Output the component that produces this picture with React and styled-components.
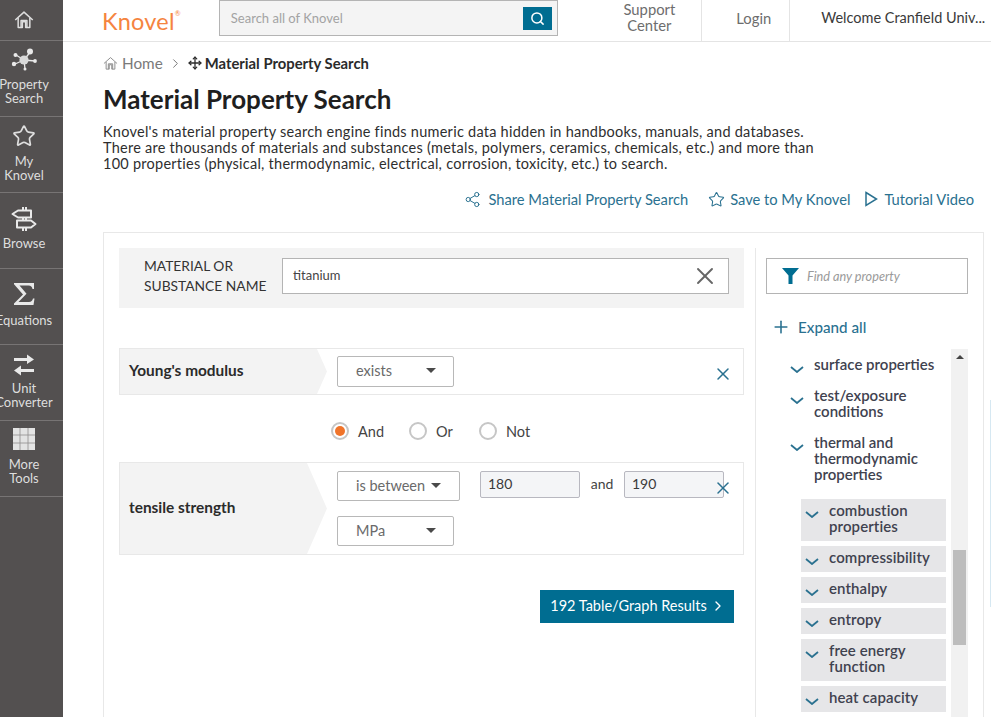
import React from 'react';
import styled, { createGlobalStyle } from 'styled-components';
import { Search, X, Plus, ChevronRight, Star, Move, Share2 } from 'lucide-react';

const GlobalStyle = createGlobalStyle`
  html, body {
    margin: 0;
    height: 717px;
    overflow: hidden;
    background: #fff;
  }
  body {
    font-family: Lato, "Open Sans", sans-serif;
    color: #2e2e2e;
  }
  * {
    box-sizing: border-box;
  }
`;

const Page = styled.div`
  display: flex;
  width: 991px;
  height: 717px;
  overflow: hidden;
  position: relative;
`;

const Sidebar = styled.nav`
  width: 63px;
  flex: none;
  background: #535050;
  color: #dedede;
  overflow: hidden;
`;

const NavItem = styled.div`
  height: ${(p) => (p.$home ? '41px' : '76px')};
  padding: ${(p) => p.$pt}px 15px 0 0;
  border-bottom: 1px solid #777474;
  display: flex;
  flex-direction: column;
  align-items: center;
  white-space: nowrap;
  font-size: 13px;
  line-height: 14px;
  text-align: center;

  svg {
    flex: none;
    margin-bottom: ${(p) => p.$gap || 0}px;
  }
`;

const Main = styled.div`
  flex: 1;
  min-width: 0;
`;

const Header = styled.header`
  height: 42px;
  border-bottom: 1px solid #e4e4e4;
  display: flex;
  align-items: center;
  padding-left: 39px;
`;

const Logo = styled.div`
  width: 117px;
  color: #f5843f;
  font-size: 23.5px;
  letter-spacing: 0.2px;

  sup {
    font-size: 7px;
    vertical-align: 14px;
    line-height: 0;
  }
`;

const SearchBox = styled.div`
  width: 340px;
  height: 36px;
  margin-top: -5px;
  background: #f4f4f4;
  border: 1px solid #b4b4b4;
  display: flex;
  align-items: center;
  justify-content: space-between;
  padding: 0 5px 0 11px;
  font-size: 13px;
  color: #a3a3a3;
`;

const SearchButton = styled.div`
  width: 29px;
  height: 23px;
  background: #006d91;
  color: #fff;
  display: flex;
  align-items: center;
  justify-content: center;
`;

const HeaderLink = styled.div`
  width: ${(p) => p.$w}px;
  margin-left: ${(p) => p.$ml || 0}px;
  height: 41px;
  padding: 0 0 ${(p) => p.$pb || 6}px ${(p) => p.$pl || 0}px;
  display: flex;
  align-items: center;
  justify-content: center;
  text-align: center;
  font-size: 14.8px;
  line-height: 16px;
  color: #6d6d6d;
  border-left: ${(p) => (p.$divider ? '1px solid #e4e4e4' : 'none')};
  white-space: nowrap;
`;

const Welcome = styled(HeaderLink)`
  justify-content: flex-start;
  color: #3a3a3a;
  font-size: 14.5px;
`;

const Content = styled.div`
  padding: 11px 7px 0 40px;
`;

const Breadcrumb = styled.div`
  height: 20px;
  display: flex;
  align-items: center;
  font-size: 15.3px;
  color: #7a7a7a;

  svg {
    flex: none;
  }
`;

const CrumbHome = styled.span`
  margin-left: 4px;
`;

const CrumbSep = styled.span`
  display: flex;
  margin: 0 5px;
`;

const CrumbCurrent = styled.span`
  color: #2b2b2b;
  font-weight: 700;
  font-size: 14.8px;
  margin-left: 3px;
`;

const Title = styled.h1`
  margin: 11px 0 0;
  font-size: 26px;
  line-height: 30px;
  font-weight: 700;
  color: #1f1f1f;
`;

const Intro = styled.p`
  margin: 10px 0 0;
  font-size: 14.5px;
  letter-spacing: 0.25px;
  line-height: 16px;
  color: #2e2e2e;
  white-space: nowrap;
`;

const Actions = styled.div`
  height: 24px;
  margin-top: 15px;
  padding-right: 10px;
  display: flex;
  justify-content: flex-end;
`;

const ActionLink = styled.div`
  display: flex;
  align-items: center;
  gap: ${(p) => p.$gap || 6}px;
  margin-left: ${(p) => p.$ml || 0}px;
  font-size: 14.7px;
  color: #2a7190;
  white-space: nowrap;
`;

const Panel = styled.section`
  margin-top: 21px;
  height: 520px;
  border: 1px solid #e8e8e8;
  display: flex;
`;

const Form = styled.div`
  width: 651px;
  flex: none;
  padding: 15px 11px 0 15px;
`;

const SubstanceRow = styled.div`
  height: 60px;
  background: #f3f3f3;
  display: flex;
  align-items: center;
  padding: 0 15px 0 25px;
`;

const SubstanceLabel = styled.div`
  width: 138px;
  flex: none;
  padding-bottom: 4px;
  font-size: 13.8px;
  line-height: 20px;
  color: #333;
`;

const SubstanceInput = styled.div`
  flex: 1;
  height: 36px;
  margin-top: -4px;
  background: #fff;
  border: 1px solid #b4b4b4;
  display: flex;
  align-items: center;
  justify-content: space-between;
  padding: 0 9px 0 10px;
  font-size: 13px;
  color: #444;

  span {
    padding-bottom: 3px;
  }
`;

const CriteriaRow = styled.div`
  height: ${(p) => p.$h}px;
  margin-top: ${(p) => p.$mt || 0}px;
  border: 1px solid #e8e8e8;
  display: flex;
  position: relative;
`;

const CriteriaLabel = styled.div`
  width: 207px;
  flex: none;
  background: #f3f3f3;
  display: flex;
  align-items: center;
  padding: 0 0 3px 9px;
  font-size: 15.4px;
  font-weight: 700;
  color: #2b2b2b;
  clip-path: polygon(0 0, ${(p) => p.$cut}px 0, 100% 50%, ${(p) => p.$cut}px 100%, 0 100%);
`;

const CriteriaFields = styled.div`
  flex: 1;
  padding: ${(p) => p.$pt}px 0 0 10px;
  display: flex;
  flex-wrap: wrap;
  align-content: flex-start;
  align-items: flex-start;
`;

const Select = styled.div`
  width: ${(p) => p.$w}px;
  height: ${(p) => p.$h || 30}px;
  flex: none;
  border: 1px solid #b8b8b8;
  border-radius: 2px;
  background: #fff;
  display: flex;
  align-items: center;
  justify-content: space-between;
  padding: 0 ${(p) => p.$pr || 17}px 2px 18px;
  font-size: 14.5px;
  color: #6a6a6a;
`;

const Caret = styled.span`
  width: 0;
  height: 0;
  border-left: 5.5px solid transparent;
  border-right: 5.5px solid transparent;
  border-top: 5.5px solid #4a4a4a;
`;

const NumberInput = styled.div`
  width: 100px;
  height: 27px;
  flex: none;
  margin-left: ${(p) => p.$ml || 0}px;
  border: 1px solid #b8b8c0;
  border-radius: 2px;
  background: #f4f5f7;
  display: flex;
  align-items: center;
  padding: 0 0 2px 7px;
  font-size: 14px;
  color: #3a3a3a;
`;

const AndText = styled.span`
  width: 44px;
  height: 26px;
  flex: none;
  text-align: center;
  font-size: 14px;
  line-height: 26px;
  color: #444;
`;

const FieldBreak = styled.div`
  flex-basis: 100%;
  height: 15px;
`;

const RemoveButton = styled.div`
  position: absolute;
  right: 10px;
  top: 15px;
  color: #2a7190;
  display: flex;
`;

const Operators = styled.div`
  height: 67px;
  padding: 5px 0 0 212px;
  display: flex;
  align-items: center;
`;

const Operator = styled.label`
  display: flex;
  align-items: center;
  gap: 9px;
  width: ${(p) => p.$w}px;
  font-size: 14.5px;
  color: #444;
`;

const Radio = styled.span`
  width: 18px;
  height: 18px;
  flex: none;
  border-radius: 50%;
  border: 2px solid #c6c6c6;
  background: #fff;
  display: flex;
  align-items: center;
  justify-content: center;

  &::after {
    content: '';
    width: 10px;
    height: 10px;
    border-radius: 50%;
    background: ${(p) => (p.$on ? '#f0742a' : 'transparent')};
  }
`;

const ResultRow = styled.div`
  display: flex;
  justify-content: flex-end;
  margin-top: 35px;
  padding-right: 10px;
`;

const ResultButton = styled.div`
  width: 194px;
  height: 33px;
  background: #006d91;
  color: #fff;
  display: flex;
  align-items: center;
  justify-content: center;
  gap: 3px;
  padding: 0 0 2px 2px;
  font-size: 14.5px;
`;

const Facets = styled.aside`
  flex: 1;
  min-width: 0;
  margin-top: 15px;
  border-left: 1px solid #e8e8e8;
  padding: 10px 15px 0 10px;
  display: flex;
  flex-direction: column;
`;

const FilterBox = styled.div`
  height: 36px;
  flex: none;
  border: 1px solid #b4b4b4;
  display: flex;
  align-items: center;
  gap: 8px;
  padding: 0 0 1px 15px;
  font-size: 12.7px;
  font-style: italic;
  color: #9a9a9a;
`;

const ExpandAll = styled.div`
  margin: 22px 0 0 5px;
  height: 22px;
  flex: none;
  display: flex;
  align-items: center;
  gap: 7px;
  font-size: 15.2px;
  font-weight: 500;
  color: #2a7190;
`;

const TreeArea = styled.div`
  margin-top: 11px;
  flex: 1;
  min-height: 0;
  display: flex;
  overflow: hidden;
`;

const Tree = styled.div`
  flex: 1;
  min-width: 0;
  padding: 7px 5px 0 24px;
`;

const Track = styled.div`
  width: 17px;
  flex: none;
  background: #f1f1f1;
  position: relative;
`;

const TrackArrow = styled.span`
  position: absolute;
  left: 5px;
  top: 6px;
  width: 0;
  height: 0;
  border-left: 4px solid transparent;
  border-right: 4px solid transparent;
  border-bottom: 4px solid #444;
`;

const Thumb = styled.span`
  position: absolute;
  left: 2px;
  top: 201px;
  width: 13px;
  height: 95px;
  background: #bdbdbd;
`;

const TopItem = styled.div`
  display: flex;
  align-items: flex-start;
  gap: 10px;
  margin-bottom: ${(p) => p.$mb || 15}px;
  font-size: 15px;
  line-height: 16px;
  font-weight: 600;
  color: #40424f;

  svg {
    flex: none;
    margin-top: 10px;
  }
`;

const SubItem = styled(TopItem)`
  margin: 0 0 5.5px 11px;
  padding: 3px 0 6.5px 4px;
  background: #e6e6e8;
  letter-spacing: 0.1px;

  svg {
    margin-top: 9px;
  }
`;

const EdgeLine = styled.div`
  position: absolute;
  right: 0;
  top: 400px;
  width: 1px;
  height: 207px;
  background: #d6e8f2;
`;

const HomeIcon = ({ size = 20, color = 'currentColor', sw = 1.8 }) => (
  <svg width={size} height={size} viewBox="0 0 24 24" fill="none" stroke={color} strokeWidth={sw} strokeLinejoin="round">
    <path d="M1.500 12 12 2.500 22.500 12" />
    <path d="M5 9.500V21h5v-7h4v7h5V9.500" />
    <path d="M8.500 21v-8.500h7V21" />
  </svg>
);

const NetworkIcon = () => (
  <svg width="28" height="24" viewBox="0 0 28 24" fill="#e9e9e9" stroke="#e9e9e9">
    <path d="M14 12 6 7M14 12l7-9M14 12 5 16M14 12l1 9M14 12l11 1" strokeWidth="1.3" />
    <circle cx="14" cy="12" r="4.600" fill="#d9d9d9" stroke="none" />
    <circle cx="20" cy="3.500" r="3" stroke="none" />
    <circle cx="5.500" cy="7" r="2" stroke="none" />
    <circle cx="4" cy="16" r="2.200" stroke="none" />
    <circle cx="25" cy="13" r="1.900" stroke="none" />
    <circle cx="15" cy="21" r="1.500" stroke="none" />
  </svg>
);

const SignIcon = () => (
  <svg width="26" height="24" viewBox="0 0 26 24" fill="none" stroke="#e9e9e9" strokeWidth="2" strokeLinejoin="round">
    <path d="M7 10.500 1.500 7 7 3.500h13v7H7z" />
    <path d="M6 13.500h14l4.500 3.500-4.500 3.500H6z" />
    <path d="M12 3.500V0M15 3.500V0M12 24v-3.500M15 24v-3.500M12 10.500v3M15 10.500v3" />
  </svg>
);

const SigmaIcon = () => (
  <svg width="24" height="26" viewBox="0 0 24 26" fill="#e9e9e9">
    <path d="M2 2h20v6h-1.500c-.4-2-1.500-3.500-4-3.500H7.500l7 8.200-8 8.300H17c2.300 0 3.400-1.300 4-3.500h1.500L21.500 24H2v-1.400l9-9.200L2 3.300z" />
  </svg>
);

const SwapIcon = () => (
  <svg width="24" height="22" viewBox="0 0 24 22" fill="#e9e9e9">
    <path d="M2 4h13V.5l7 5-7 4.500V7H2z" />
    <path d="M22 15H9v-3.500l-7 5 7 5V18h13z" />
  </svg>
);

const GridIcon = () => (
  <svg width="22" height="22" viewBox="0 0 22 22" fill="#e3e3e3">
    <path d="M0 0h22v22H0z" />
    <path d="M7 0v22M15 0v22M0 7h22M0 15h22" stroke="#8f8d8d" strokeWidth="0.8" />
  </svg>
);

const FunnelIcon = () => (
  <svg width="17" height="16" viewBox="0 0 17 16" fill="#006d91">
    <path d="M0 0h17l-6.500 7.500V16h-4V7.500z" />
  </svg>
);

const PlayIcon = () => (
  <svg width="13" height="16" viewBox="0 0 13 16" fill="none" stroke="#2a7190" strokeWidth="1.500">
    <path d="M1 1.500 11.500 8 1 14.500z" />
  </svg>
);

const Chevron = () => (
  <svg width="14" height="7" viewBox="0 0 14 7" fill="none" stroke="#2a7190" strokeWidth="1.800">
    <path d="M1 1 7 6l6-5" />
  </svg>
);

const navItems = [
  { label: ['Property', 'Search'], icon: <NetworkIcon />, pt: 7, gap: 5 },
  { label: ['My', 'Knovel'], icon: <Star size={24} strokeWidth={1.7} />, pt: 7, gap: 6 },
  { label: ['Browse'], icon: <SignIcon />, pt: 14, gap: 5 },
  { label: ['Equations'], icon: <SigmaIcon />, pt: 12, gap: 6 },
  { label: ['Unit', 'Converter'], icon: <SwapIcon />, pt: 9, gap: 5 },
  { label: ['More', 'Tools'], icon: <GridIcon />, pt: 7, gap: 7 },
];

const subItems = [
  ['combustion', 'properties'],
  ['compressibility'],
  ['enthalpy'],
  ['entropy'],
  ['free energy', 'function'],
  ['heat capacity'],
  ['heat transfer'],
];

const lines = (parts) =>
  parts.map((part, i) => (
    <React.Fragment key={part}>
      {i > 0 && <br />}
      {part}
    </React.Fragment>
  ));

const App = () => {
  return (
    <Page>
      <GlobalStyle />
      <Sidebar>
        <NavItem $home $pt={10}>
          <HomeIcon />
        </NavItem>
        {navItems.map((item) => (
          <NavItem key={item.label[0]} $pt={item.pt} $gap={item.gap}>
            {item.icon}
            <div>{lines(item.label)}</div>
          </NavItem>
        ))}
      </Sidebar>
      <Main>
        <Header>
          <Logo>
            Knovel<sup>®</sup>
          </Logo>
          <SearchBox>
            Search all of Knovel
            <SearchButton>
              <Search size={15} strokeWidth={2.4} />
            </SearchButton>
          </SearchBox>
          <HeaderLink $w={104} $ml={39} $pb={8}>
            {lines(['Support', 'Center'])}
          </HeaderLink>
          <HeaderLink $w={88} $divider $pl={16}>
            Login
          </HeaderLink>
          <Welcome $w={202} $divider $pl={31}>
            Welcome Cranfield Univ...
          </Welcome>
        </Header>
        <Content>
          <Breadcrumb>
            <HomeIcon size={15} color="#8a8a8a" sw={1.5} />
            <CrumbHome>Home</CrumbHome>
            <CrumbSep>
              <ChevronRight size={15} strokeWidth={1.6} />
            </CrumbSep>
            <Move size={14} strokeWidth={2.2} color="#2b2b2b" />
            <CrumbCurrent>Material Property Search</CrumbCurrent>
          </Breadcrumb>
          <Title>Material Property Search</Title>
          <Intro>
            {lines([
              "Knovel's material property search engine finds numeric data hidden in handbooks, manuals, and databases.",
              'There are thousands of materials and substances (metals, polymers, ceramics, chemicals, etc.) and more than',
              '100 properties (physical, thermodynamic, electrical, corrosion, toxicity, etc.) to search.',
            ])}
          </Intro>
          <Actions>
            <ActionLink $gap={7}>
              <Share2 size={17} strokeWidth={1.4} />
              Share Material Property Search
            </ActionLink>
            <ActionLink $ml={20} $gap={5}>
              <Star size={17} strokeWidth={1.5} />
              Save to My Knovel
            </ActionLink>
            <ActionLink $ml={15} $gap={6}>
              <PlayIcon />
              Tutorial Video
            </ActionLink>
          </Actions>
          <Panel>
            <Form>
              <SubstanceRow>
                <SubstanceLabel>{lines(['MATERIAL OR', 'SUBSTANCE NAME'])}</SubstanceLabel>
                <SubstanceInput>
                  <span>titanium</span>
                  <X size={28} strokeWidth={1.6} color="#666" />
                </SubstanceInput>
              </SubstanceRow>
              <CriteriaRow $h={47} $mt={40}>
                <CriteriaLabel $cut={197}>Young's modulus</CriteriaLabel>
                <CriteriaFields $pt={7}>
                  <Select $w={117} $h={31}>
                    exists
                    <Caret />
                  </Select>
                </CriteriaFields>
                <RemoveButton>
                  <X size={20} strokeWidth={1.8} />
                </RemoveButton>
              </CriteriaRow>
              <Operators>
                <Operator $w={78}>
                  <Radio $on />
                  And
                </Operator>
                <Operator $w={70}>
                  <Radio />
                  Or
                </Operator>
                <Operator $w={70}>
                  <Radio />
                  Not
                </Operator>
              </Operators>
              <CriteriaRow $h={93}>
                <CriteriaLabel $cut={187}>tensile strength</CriteriaLabel>
                <CriteriaFields $pt={8}>
                  <Select $w={123} $pr={18}>
                    is between
                    <Caret />
                  </Select>
                  <NumberInput $ml={20}>180</NumberInput>
                  <AndText>and</AndText>
                  <NumberInput>190</NumberInput>
                  <FieldBreak />
                  <Select $w={117}>
                    MPa
                    <Caret />
                  </Select>
                </CriteriaFields>
                <RemoveButton>
                  <X size={20} strokeWidth={1.8} />
                </RemoveButton>
              </CriteriaRow>
              <ResultRow>
                <ResultButton>
                  192 Table/Graph Results
                  <ChevronRight size={16} strokeWidth={2} />
                </ResultButton>
              </ResultRow>
            </Form>
            <Facets>
              <FilterBox>
                <FunnelIcon />
                Find any property
              </FilterBox>
              <ExpandAll>
                <Plus size={20} strokeWidth={1.9} />
                Expand all
              </ExpandAll>
              <TreeArea>
                <Tree>
                  <TopItem $mb={14}>
                    <Chevron />
                    surface properties
                  </TopItem>
                  <TopItem>
                    <Chevron />
                    <div>{lines(['test/exposure', 'conditions'])}</div>
                  </TopItem>
                  <TopItem $mb={17}>
                    <Chevron />
                    <div>{lines(['thermal and', 'thermodynamic', 'properties'])}</div>
                  </TopItem>
                  {subItems.map((item) => (
                    <SubItem key={item[0]}>
                      <Chevron />
                      <div>{lines(item)}</div>
                    </SubItem>
                  ))}
                </Tree>
                <Track>
                  <TrackArrow />
                  <Thumb />
                </Track>
              </TreeArea>
            </Facets>
          </Panel>
        </Content>
      </Main>
      <EdgeLine />
    </Page>
  );
};

export default App;
